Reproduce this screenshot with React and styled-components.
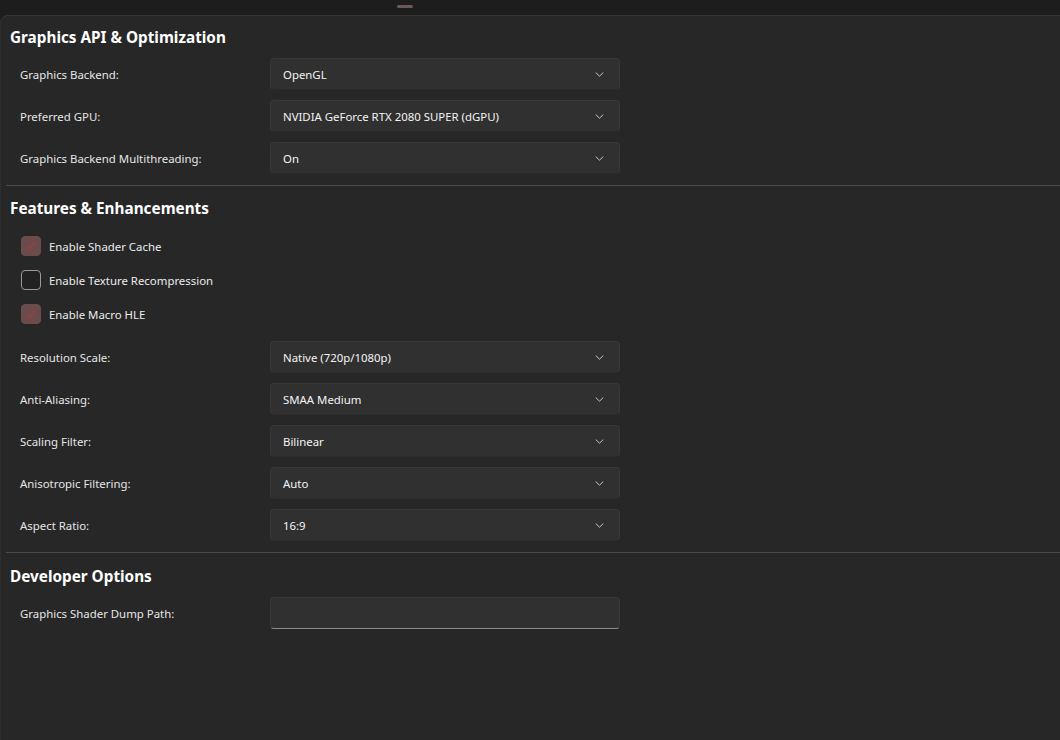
import React from 'react';
import styled, { createGlobalStyle } from 'styled-components';

const GlobalStyle = createGlobalStyle`
  html, body {
    margin: 0;
    padding: 0;
    background: #272727;
  }
  body {
    font-family: "Noto Sans", "Open Sans", "Liberation Sans", sans-serif;
    color: #e8e8e8;
  }
`;

const graphicsRows = [
  { label: 'Graphics Backend:', value: 'OpenGL' },
  { label: 'Preferred GPU:', value: 'NVIDIA GeForce RTX 2080 SUPER (dGPU)' },
  { label: 'Graphics Backend Multithreading:', value: 'On' },
];

const featureChecks = [
  { label: 'Enable Shader Cache', checked: true },
  { label: 'Enable Texture Recompression', checked: false },
  { label: 'Enable Macro HLE', checked: true },
];

const featureRows = [
  { label: 'Resolution Scale:', value: 'Native (720p/1080p)' },
  { label: 'Anti-Aliasing:', value: 'SMAA Medium' },
  { label: 'Scaling Filter:', value: 'Bilinear' },
  { label: 'Anisotropic Filtering:', value: 'Auto' },
  { label: 'Aspect Ratio:', value: '16:9' },
];

const Chevron = () => (
  <svg width="9" height="5" viewBox="0 0 9 5" fill="none">
    <path d="M1 0.8l3.5 3.4 3.5-3.4" stroke="#c8c8c8" strokeWidth="1" strokeLinecap="round" strokeLinejoin="round" />
  </svg>
);

// thin dark-red tick inside the checked box
const Check = () => (
  <svg width="12" height="10" viewBox="0 0 12 10" fill="none" style={{ display: 'block' }}>
    <path d="M2.5 5.5l2.2 2.2L9.5 2.5" stroke="#a33c3c" strokeWidth="1.3" strokeLinecap="round" strokeLinejoin="round" />
  </svg>
);

const SettingRow = ({ label, children }) => (
  <Row>
    <Label>{label}</Label>
    {children}
  </Row>
);

const Dropdown = ({ value }) => (
  <Select>
    <span>{value}</span>
    <Chevron />
  </Select>
);

const CheckItem = ({ label, checked }) => (
  <CheckRow>
    <Box $checked={checked}>{checked ? <Check /> : null}</Box>
    <CheckLabel>{label}</CheckLabel>
  </CheckRow>
);

export default function App() {
  return (
    <Page>
      <GlobalStyle />
      <TitleStrip>
        <Handle />
      </TitleStrip>
      <Content>
        <Section $top={10}>
          <Heading>Graphics API &amp; Optimization</Heading>
          {graphicsRows.map((r) => (
            <SettingRow key={r.label} label={r.label}>
              <Dropdown value={r.value} />
            </SettingRow>
          ))}
        </Section>
        <Section $top={11}>
          <Heading>Features &amp; Enhancements</Heading>
          <CheckGroup>
            {featureChecks.map((c) => (
              <CheckItem key={c.label} label={c.label} checked={c.checked} />
            ))}
          </CheckGroup>
          {featureRows.map((r) => (
            <SettingRow key={r.label} label={r.label}>
              <Dropdown value={r.value} />
            </SettingRow>
          ))}
        </Section>
        <Section $top={12} $last>
          <Heading>Developer Options</Heading>
          <SettingRow label="Graphics Shader Dump Path:">
            <TextInput />
          </SettingRow>
        </Section>
      </Content>
    </Page>
  );
}

const Page = styled.div`
  width: 1060px;
  height: 740px;
  background: #1d1d1d;
  overflow: hidden;
  display: flex;
  flex-direction: column;
`;

const TitleStrip = styled.div`
  height: 15px;
  flex: none;
  display: flex;
  align-items: center;
  padding-left: 397px;
`;

const Handle = styled.div`
  width: 16px;
  height: 3px;
  border-radius: 2px;
  background: #6f5758;
  margin-top: -2px;
`;

const Content = styled.div`
  flex: 1;
  background: #272727;
  border-top: 1px solid #353535;
  border-left: 1px solid #2f2f2f;
  border-top-left-radius: 8px;
  padding-left: 5px;
`;

const Section = styled.section`
  display: flex;
  flex-direction: column;
  gap: 10px;
  padding: ${(p) => p.$top}px 0 11px 4px;
  border-bottom: ${(p) => (p.$last ? 'none' : '1px solid #4a4a4a')};
`;

const Heading = styled.h2`
  margin: 0;
  font-size: 15.3px;
  line-height: 22px;
  font-weight: 700;
  color: #ffffff;
`;

const Row = styled.div`
  display: flex;
  align-items: center;
  padding-left: 10px;
`;

const Label = styled.div`
  width: 250px;
  font-size: 11.4px;
  color: #e6e6e6;
`;

const Select = styled.div`
  box-sizing: border-box;
  width: 350px;
  height: 32px;
  display: flex;
  align-items: center;
  justify-content: space-between;
  padding: 0 15px 0 12px;
  background: #303030;
  border: 1px solid #383838;
  border-bottom-color: #2c2c2c;
  border-radius: 4px;
  font-size: 11.4px;
  color: #f4f4f4;
`;

const TextInput = styled.div`
  box-sizing: border-box;
  width: 350px;
  height: 32px;
  background: #303030;
  border: 1px solid #383838;
  border-bottom: 1px solid #8c8c8c;
  border-radius: 4px;
`;

const CheckGroup = styled.div`
  display: flex;
  flex-direction: column;
  gap: 2px;
  margin-top: 1px;
  padding-bottom: 1px;
`;

const CheckRow = styled.div`
  display: flex;
  align-items: center;
  height: 32px;
  padding-left: 11px;
  gap: 8px;
`;

const Box = styled.div`
  box-sizing: border-box;
  width: 20px;
  height: 20px;
  flex: none;
  border-radius: 4px;
  display: flex;
  align-items: center;
  justify-content: center;
  background: ${(p) => (p.$checked ? '#6b4b4c' : '#222222')};
  border: 1px solid ${(p) => (p.$checked ? '#6b4b4c' : '#9a9a9a')};
`;

const CheckLabel = styled.span`
  font-size: 11.4px;
  color: #ececec;
`;
